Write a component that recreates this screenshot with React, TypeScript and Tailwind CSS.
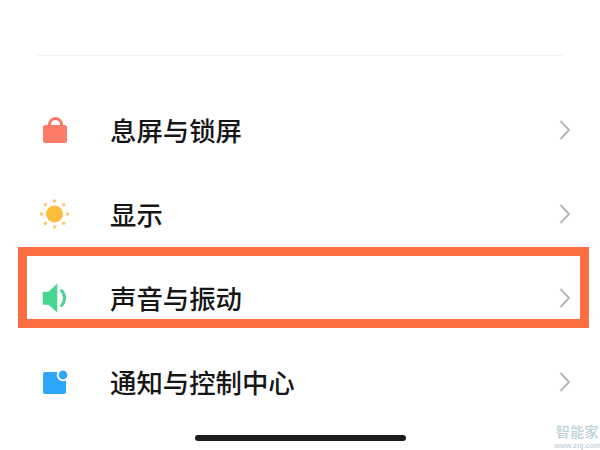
const font = { fontFamily: '"Noto Sans CJK SC", "Liberation Sans", sans-serif' };

function LockIcon() {
  return (
    <svg width="26" height="30" viewBox="0 0 26 30" aria-hidden>
      <path d="M7.5 11V9.5a6 6 0 0 1 12 0V11" fill="none" stroke="#fb7a68" strokeWidth="3" />
      <rect x="1" y="10" width="24" height="18" rx="2.5" fill="#fb7a68" />
    </svg>
  );
}

function SunIcon() {
  const rays = [0, 45, 90, 135, 180, 225, 270, 315];
  return (
    <svg width="30" height="30" viewBox="0 0 30 30" aria-hidden>
      <circle cx="14.5" cy="15" r="8.5" fill="#fbbf3c" />
      {rays.map((r) => (
        <circle key={r} cx="14.5" cy="2" r="1.7" fill="#fbcb6a" transform={`rotate(${r} 14.5 15)`} />
      ))}
    </svg>
  );
}

function SoundIcon() {
  return (
    <svg width="26" height="30" viewBox="0 0 26 30" aria-hidden>
      <path d="M1 9h5.5L15 1v28l-8.5-7.5H1z" fill="#45d690" stroke="#45d690" strokeWidth="0.5" strokeLinejoin="round" />
      <path d="M19.5 7.5c4 4 4 11 0 15" fill="none" stroke="#45d690" strokeWidth="3" strokeLinecap="round" />
    </svg>
  );
}

function NotifyIcon() {
  return (
    <svg width="28" height="28" viewBox="0 0 28 28" aria-hidden>
      <rect x="2" y="4" width="23" height="22" rx="2" fill="#2ea6fb" />
      <circle cx="22" cy="7" r="6.2" fill="#ffffff" />
      <circle cx="22" cy="7" r="4.4" fill="#2ea6fb" />
    </svg>
  );
}

function Chevron() {
  return (
    <svg width="14" height="22" viewBox="0 0 14 22" fill="none" aria-hidden>
      <path d="M2.5 2L11 11L2.5 20" stroke="#b8b8b8" strokeWidth="2" />
    </svg>
  );
}

const rows = [
  { label: '息屏与锁屏', icon: <LockIcon /> },
  { label: '显示', icon: <SunIcon /> },
  { label: '声音与振动', icon: <SoundIcon /> },
  { label: '通知与控制中心', icon: <NotifyIcon /> },
];

export default function App() {
  return (
    <div className="relative h-[450px] w-[600px] overflow-hidden bg-white" style={font}>
      <div className="mx-[37px] mt-[55px] h-px bg-[#f1f1f1]" />

      <div className="mt-[32px] flex flex-col">
        {rows.map((row) => (
          <div key={row.label} className="flex h-[84px] items-center pr-[28px] pl-[40px]">
            <div className="flex w-[30px] justify-center">{row.icon}</div>
            <span className="ml-[40px] flex-1 text-[26.4px] leading-none font-medium text-[#161616]">
              {row.label}
            </span>
            <Chevron />
          </div>
        ))}
      </div>

      {/* highlight box drawn over the sound row */}
      <div className="absolute top-[247px] left-[18px] h-[81px] w-[571px] border-[9px] border-[#fd6f43]" />

      <div className="absolute top-[435px] left-[195px] h-[6px] w-[211px] rounded-full bg-[#1c1c1c]" />

      <div className="absolute top-[421px] left-[554px] flex flex-col items-center opacity-80">
        <span className="text-[14px] leading-[20px] tracking-[0.4px] font-medium text-[#a9c8d2]">智能家</span>
        <span className="text-[8px] leading-[9px] text-[#9dbdc8]" style={{ fontFamily: '"Liberation Sans", sans-serif' }}>
          www.znj.com
        </span>
      </div>
    </div>
  );
}
